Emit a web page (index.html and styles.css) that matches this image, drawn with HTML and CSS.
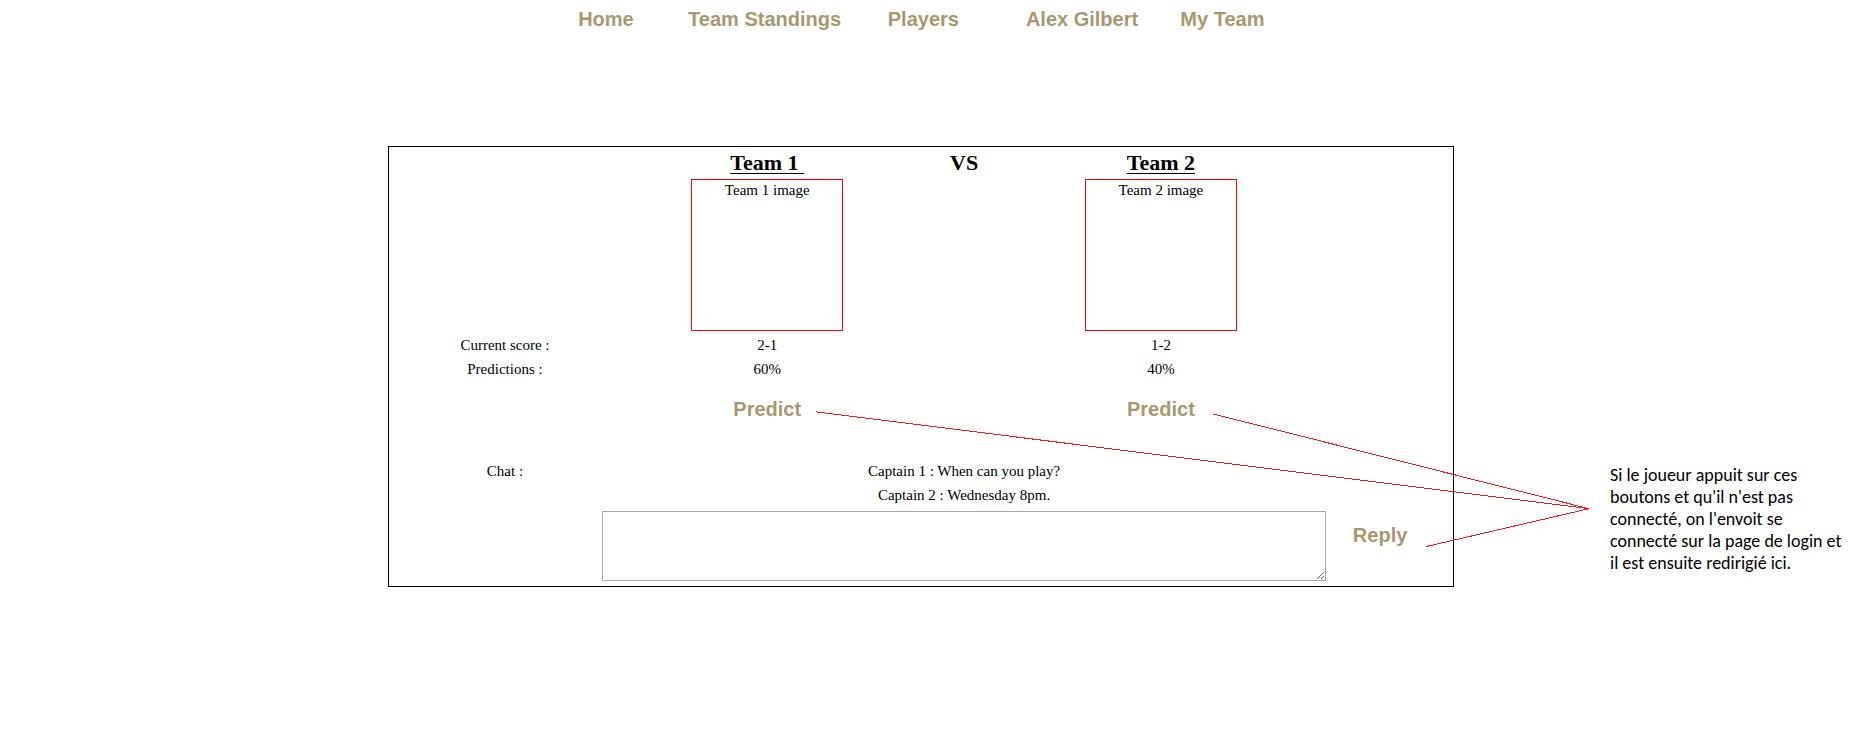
FILE: index.html
```html
<!DOCTYPE html>
<html lang="en">
<head>
<meta charset="utf-8">
<title>Team 1 VS Team 2</title>
<link rel="stylesheet" href="styles.css">
</head>
<body>
<header class="top">
  <nav class="nav">
    <a href="#">Home</a>
    <a href="#">Team Standings</a>
    <a href="#">Players</a>
    <a href="#">Alex Gilbert</a>
    <a href="#">My Team</a>
  </nav>
</header>
<main class="stage">
  <section class="panel">
    <table class="match">
      <colgroup>
        <col class="col-label"><col class="col-team"><col class="col-vs"><col class="col-team"><col class="col-action">
      </colgroup>
      <tr class="teams">
        <td></td>
        <th><span class="team-name">Team 1&nbsp;</span></th>
        <th>VS</th>
        <th><span class="team-name">Team 2</span></th>
        <td></td>
      </tr>
      <tr>
        <td></td>
        <td><div class="team-image">Team 1 image</div></td>
        <td></td>
        <td><div class="team-image">Team 2 image</div></td>
        <td></td>
      </tr>
      <tr class="first-stat">
        <td>Current score :</td><td>2-1</td><td></td><td>1-2</td><td></td>
      </tr>
      <tr>
        <td>Predictions :</td><td>60%</td><td></td><td>40%</td><td></td>
      </tr>
      <tr class="predict">
        <td></td>
        <td><button type="button" class="action">Predict</button></td>
        <td></td>
        <td><button type="button" class="action">Predict</button></td>
        <td></td>
      </tr>
      <tr>
        <td><label for="message">Chat :</label></td>
        <td colspan="3">Captain 1 : When can you play?</td>
        <td></td>
      </tr>
      <tr>
        <td></td>
        <td colspan="3">Captain 2 : Wednesday 8pm.</td>
        <td></td>
      </tr>
      <tr class="compose">
        <td></td>
        <td colspan="3"><textarea id="message" class="message"></textarea></td>
        <td class="reply"><button type="button" class="action">Reply</button></td>
      </tr>
    </table>
  </section>
  <aside class="note">Si le joueur appuit sur ces boutons et qu'il n'est pas connecté, on l'envoit se connecté sur la page de login et il est ensuite redirigié ici.</aside>
  <svg class="pointers" viewBox="0 0 1876 442" preserveAspectRatio="none" aria-hidden="true">
    <path d="M816 266.5L1589 363.5M1213 268.5L1589 363.5M1426 401.5L1589 363.5"/>
  </svg>
</main>
</body>
</html>
```
FILE: styles.css
```css
body {
  margin: 0;
  background: #fff;
  color: #000;
  font: 15px/24px "Liberation Serif", "Times New Roman", serif;
}

.top,
.stage {
  display: grid;
  grid-template-columns: 388fr 1066fr 422fr;
}

.top {
  padding: 7px 0 115px;
}

.nav {
  grid-column: 2;
  display: grid;
  grid-template-columns: repeat(4, 13fr) 10fr;
  padding: 0 16% 0 13%;
  text-align: center;
  white-space: nowrap;
}

.nav a,
.action {
  color: #a7986f;
  font: bold 20px/24px "Liberation Sans", Arial, sans-serif;
  text-decoration: none;
}

.action {
  display: inline-block;
  vertical-align: top;
  padding: 0;
  border: 0;
  background: none;
  cursor: pointer;
}

.stage {
  position: relative;
}

.panel {
  grid-column: 2;
  border: 1px solid #000;
}

.match {
  width: 100%;
  table-layout: fixed;
  border-collapse: collapse;
  text-align: center;
}

.match td,
.match th {
  padding: 0;
}

.col-label { width: 21.8%; }
.col-team { width: 27.5%; }
.col-vs { width: 9.5%; }
.col-action { width: 13.7%; }

.match .teams th {
  padding-bottom: 1px;
  font-size: 22px;
  line-height: 31px;
}

.team-name {
  text-decoration: underline 1px;
  text-underline-offset: 3px;
}

.team-image {
  width: 150px;
  height: 150px;
  margin: 0 auto;
  border: 1px solid #f00;
  line-height: 20px;
}

.match .first-stat td {
  padding-top: 2px;
}

.match .predict td {
  padding: 16px 0 38px;
}

.match .compose td {
  padding: 4px 0 5px;
  vertical-align: top;
}

.match .compose .reply {
  padding-top: 16px;
}

.message {
  display: block;
  box-sizing: border-box;
  width: calc(100% + 38px);
  height: 70px;
  margin: 0 -19px;
  border: 1px solid #a9a9a9;
  position: relative;
  resize: both;
}

.note {
  align-self: end;
  padding: 0 32px 13px 156px;
  font: 18px/22px Carlito, Calibri, Lato, sans-serif;
}

.pointers {
  position: absolute;
  inset: 0;
  width: 100%;
  height: 100%;
  pointer-events: none;
}

.pointers path {
  fill: none;
  stroke: #ed1c24;
  stroke-width: 1;
  vector-effect: non-scaling-stroke;
  shape-rendering: crispEdges;
}
```
